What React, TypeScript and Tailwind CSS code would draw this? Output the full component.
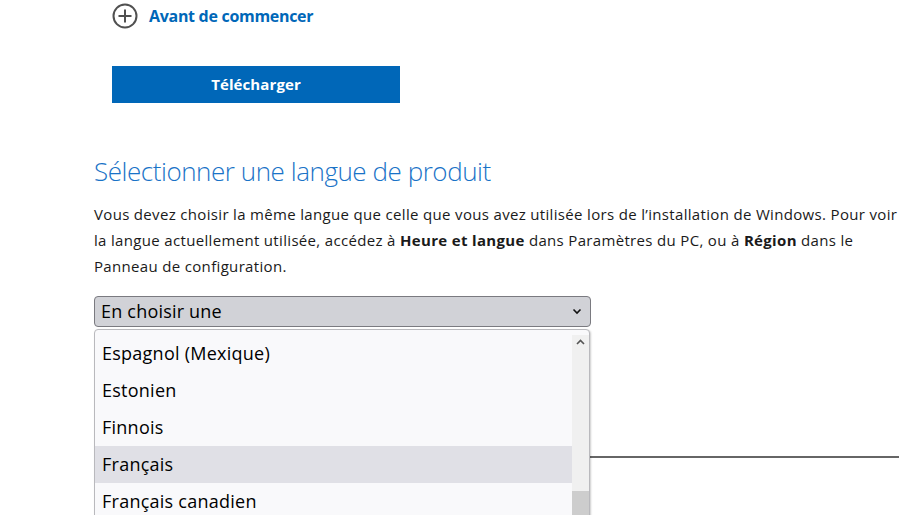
import React from "react";

const font = { fontFamily: '"Segoe UI", "Open Sans", "Noto Sans", sans-serif' };

const languages = ["Espagnol (Mexique)", "Estonien", "Finnois", "Français", "Français canadien"];

function PlusCircle() {
  return (
    <svg width="26" height="26" viewBox="0 0 26 26" className="shrink-0">
      <circle cx="13" cy="13" r="11.5" fill="none" stroke="#505050" strokeWidth="2" />
      <path d="M13 6.5v13M6.5 13h13" stroke="#505050" strokeWidth="2" />
    </svg>
  );
}

export default function App() {
  return (
    <div className="w-[919px] h-[515px] overflow-hidden bg-white text-black" style={font}>
      <div className="pl-[94px] pr-[20px]">
        <div className="pl-[18px] pt-[3px] flex items-center gap-[11px] h-[28px]">
          <PlusCircle />
          <span className="text-[16px] font-bold text-[#0067b8] tracking-[-0.3px]">Avant de commencer</span>
        </div>

        <div className="pl-[18px] mt-[38px]">
          <button className="w-[288px] h-[37px] bg-[#0067b8] text-white text-[15px] font-bold tracking-[0.1px]">
            Télécharger
          </button>
        </div>

        <h2 className="mt-[51px] text-[26px] font-light text-[#1a73c7] leading-[34px] tracking-[-0.45px]">
          Sélectionner une langue de produit
        </h2>

        <p className="mt-[13px] text-[15px] leading-[26px] tracking-[0.33px] text-[#1a1a1a]">
          Vous devez choisir la même langue que celle que vous avez utilisée lors de l’installation de Windows. Pour voir
          <br />
          la langue actuellement utilisée, accédez à <b>Heure et langue</b> dans Paramètres du PC, ou à <b>Région</b> dans le
          <br />
          Panneau de configuration.
        </p>

        <div className="relative mt-[17px] w-[497px]">
          <div className="h-[31px] rounded-[4px] border border-[#7a7a80] bg-[#d1d2d7] flex items-center justify-between pl-[6px] pr-[8px]">
            <span className="text-[18px] tracking-[0.2px]">En choisir une</span>
            <svg width="10" height="7" viewBox="0 0 10 7">
              <path d="M1.5 1.5l3.5 3.5 3.5-3.5" fill="none" stroke="#111" strokeWidth="1.6" />
            </svg>
          </div>

          <div className="absolute left-0 top-[33px] w-[496px] h-[200px] rounded-t-[4px] border border-[#b9b9bd] bg-[#f9f9fb] shadow-[1px_1px_2px_rgba(0,0,0,0.2)] flex z-10">
            <div className="flex-1 pt-[5px]">
              {languages.map((l) => (
                <div
                  key={l}
                  className={`h-[37px] flex items-center pl-[7px] text-[18px] tracking-[0.25px] ${
                    l === "Français" ? "bg-[#e0e0e6]" : ""
                  }`}
                >
                  {l}
                </div>
              ))}
            </div>
            <div className="w-[17px] mt-[5px] bg-[#f0f0f0] flex flex-col">
              <div className="h-[12px] flex items-center justify-center mt-[1px]">
                <svg width="9" height="6" viewBox="0 0 9 6">
                  <path d="M1 5l3.5-3.5L8 5" fill="none" stroke="#555" strokeWidth="1.6" />
                </svg>
              </div>
              <div className="mt-[143px] flex-1 bg-[#cdcdcd]" />
            </div>
          </div>
        </div>

        <div className="mt-[129px] h-[2px] bg-[#666] w-[805px]" />
      </div>
    </div>
  );
}
